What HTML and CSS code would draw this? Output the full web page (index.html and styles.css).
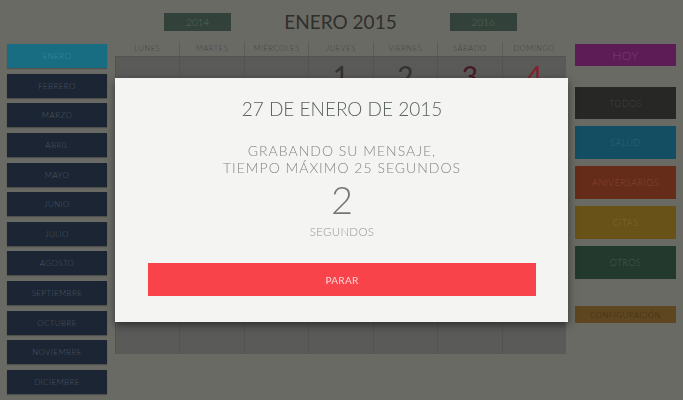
FILE: index.html
```html
<!DOCTYPE html>
<html lang="es">
<head>
<meta charset="utf-8">
<title>Calendario</title>
<link rel="stylesheet" href="styles.css">
</head>
<body>
<div class="app">
  <nav class="months">
    <div class="month active">ENERO</div>
    <div class="month">FEBRERO</div>
    <div class="month">MARZO</div>
    <div class="month">ABRIL</div>
    <div class="month">MAYO</div>
    <div class="month">JUNIO</div>
    <div class="month">JULIO</div>
    <div class="month">AGOSTO</div>
    <div class="month">SEPTIEMBRE</div>
    <div class="month">OCTUBRE</div>
    <div class="month">NOVIEMBRE</div>
    <div class="month">DICIEMBRE</div>
  </nav>
  <main class="cal">
    <div class="cal-top">
      <div class="year">2014</div>
      <h1 class="title">ENERO 2015</h1>
      <div class="year">2016</div>
    </div>
    <div class="weekdays">
      <div>LUNES</div><div>MARTES</div><div>MIÉRCOLES</div><div>JUEVES</div><div>VIERNES</div><div>SÁBADO</div><div>DOMINGO</div>
    </div>
    <div class="grid">
      <div class="cell"></div><div class="cell"></div><div class="cell"></div>
      <div class="cell"><span class="num">1</span></div>
      <div class="cell"><span class="num">2</span></div>
      <div class="cell"><span class="num sat">3</span></div>
      <div class="cell"><span class="num sun">4</span></div>
      <div class="cell"></div><div class="cell"></div><div class="cell"></div><div class="cell"></div><div class="cell"></div><div class="cell"></div><div class="cell"></div>
      <div class="cell"></div><div class="cell"></div><div class="cell"></div><div class="cell"></div><div class="cell"></div><div class="cell"></div><div class="cell"></div>
      <div class="cell"></div><div class="cell"></div><div class="cell"></div><div class="cell"></div><div class="cell"></div><div class="cell"></div><div class="cell"></div>
      <div class="cell"></div><div class="cell"></div><div class="cell"></div><div class="cell"></div><div class="cell"></div><div class="cell"></div><div class="cell"></div>
    </div>
  </main>
  <aside class="cats">
    <div class="cat hoy">HOY</div>
    <div class="cat todos">TODOS</div>
    <div class="cat salud">SALUD</div>
    <div class="cat aniv">ANIVERSARIOS</div>
    <div class="cat citas">CITAS</div>
    <div class="cat otros">OTROS</div>
    <div class="cat config">CONFIGURACIÓN</div>
  </aside>
</div>
<div class="overlay">
  <div class="modal">
    <h2 class="m-date">27 DE ENERO DE 2015</h2>
    <p class="m-msg">GRABANDO SU MENSAJE,<br>TIEMPO MÁXIMO 25 SEGUNDOS</p>
    <div class="m-count">2</div>
    <div class="m-unit">SEGUNDOS</div>
    <div class="m-btn">PARAR</div>
  </div>
</div>
</body>
</html>
```

FILE: styles.css
```css
* { box-sizing: border-box; }
html, body { margin: 0; padding: 0; }
body {
  width: 683px;
  height: 400px;
  overflow: hidden;
  background: #6a6a65;
  font-family: "Lato", "Liberation Sans", sans-serif;
}
.app {
  display: grid;
  grid-template-columns: 100px 451px 102px;
  column-gap: 8px;
  padding-left: 7px;
  align-items: start;
}
.months {
  padding-top: 44px;
  display: flex;
  flex-direction: column;
  gap: 5.65px;
}
.month {
  height: 24px;
  background: #1b2533;
  color: #4e5868;
  font-size: 8px;
  font-weight: 300;
  display: flex;
  align-items: center;
  justify-content: center;
  letter-spacing: 0.4px;
  box-shadow: 0 1px 1px rgba(0,0,0,0.25);
}
.month.active { background: #186d82; color: #388a9c; }

.cal { display: flex; flex-direction: column; }
.cal-top {
  padding-top: 13px;
  height: 42px;
  display: flex;
  justify-content: center;
  align-items: flex-start;
  gap: 53px;
}
.year {
  width: 67px;
  height: 18px;
  background: #32423a;
  color: #53695a;
  font-size: 10px;
  font-weight: 300;
  display: flex;
  align-items: center;
  justify-content: center;
}
.title {
  margin: 0;
  margin-top: -2px;
  font-weight: 400;
  font-size: 19px;
  line-height: 22px;
  color: #2f2f2b;
}
.weekdays {
  height: 14px;
  display: grid;
  grid-template-columns: repeat(7, 1fr);
}
.weekdays div {
  font-size: 7.5px;
  font-weight: 300;
  color: #444441;
  text-align: center;
  line-height: 14px;
  letter-spacing: 0.6px;
  border-left: 1px solid #5c5c58;
}
.weekdays div:first-child { border-left: none; }
.grid {
  height: 298px;
  display: grid;
  grid-template-columns: repeat(7, 1fr);
  grid-template-rows: repeat(5, 1fr);
  background: #5a5a58;
}
.cell {
  border-left: 1px solid #535351;
  border-top: 1px solid #535351;
  text-align: center;
}
.num {
  display: block;
  font-size: 28px;
  font-weight: 400;
  line-height: 28px;
  padding-top: 5px;
  color: #333331;
}
.num.sat { color: #481824; }
.num.sun { color: #84202e; }

.cats {
  margin-left: 1px;
  padding-top: 44px;
  display: flex;
  flex-direction: column;
}
.cat {
  height: 33px;
  margin-bottom: 7px;
  display: flex;
  align-items: center;
  justify-content: center;
  font-size: 9px;
  font-weight: 300;
  letter-spacing: 0.4px;
}
.hoy { height: 22px; margin-bottom: 21px; background: #5e1c56; color: #7f3e73; font-size: 12px; }
.todos { height: 32px; background: #272726; color: #434341; }
.salud { background: #144e62; color: #2d687e; }
.aniv { background: #652c1a; color: #854933; }
.citas { background: #695218; color: #80692f; }
.otros { background: #23392d; color: #445d4f; }
.config { margin-top: 20px; height: 17px; background: #5e4621; color: #402c12; font-size: 8px; }

.overlay {
  position: fixed;
  inset: 0;
  display: flex;
  align-items: center;
  justify-content: center;
}
.modal {
  width: 453px;
  height: 244px;
  background: #f4f4f3;
  box-shadow: 0 3px 8px rgba(0,0,0,0.5);
  padding: 20px 32px 0 33px;
  display: flex;
  flex-direction: column;
  align-items: center;
}
.m-date {
  margin: 0;
  font-weight: 300;
  font-size: 19px;
  line-height: 22px;
  color: #59625d;
}
.m-msg {
  margin: 22px 0 0;
  font-weight: 300;
  font-size: 14px;
  line-height: 17px;
  letter-spacing: 1px;
  color: #858583;
  text-align: center;
}
.m-count {
  margin-top: 4px;
  font-size: 38px;
  line-height: 38px;
  font-weight: 300;
  color: #767674;
}
.m-unit {
  margin-top: 7px;
  font-size: 11.5px;
  font-weight: 300;
  color: #959593;
  letter-spacing: 0.3px;
}
.m-btn {
  margin-top: 25px;
  width: 388px;
  height: 33px;
  background: #f9434b;
  color: #fbd9da;
  font-size: 10px;
  display: flex;
  align-items: center;
  justify-content: center;
  letter-spacing: 0.3px;
}
```
